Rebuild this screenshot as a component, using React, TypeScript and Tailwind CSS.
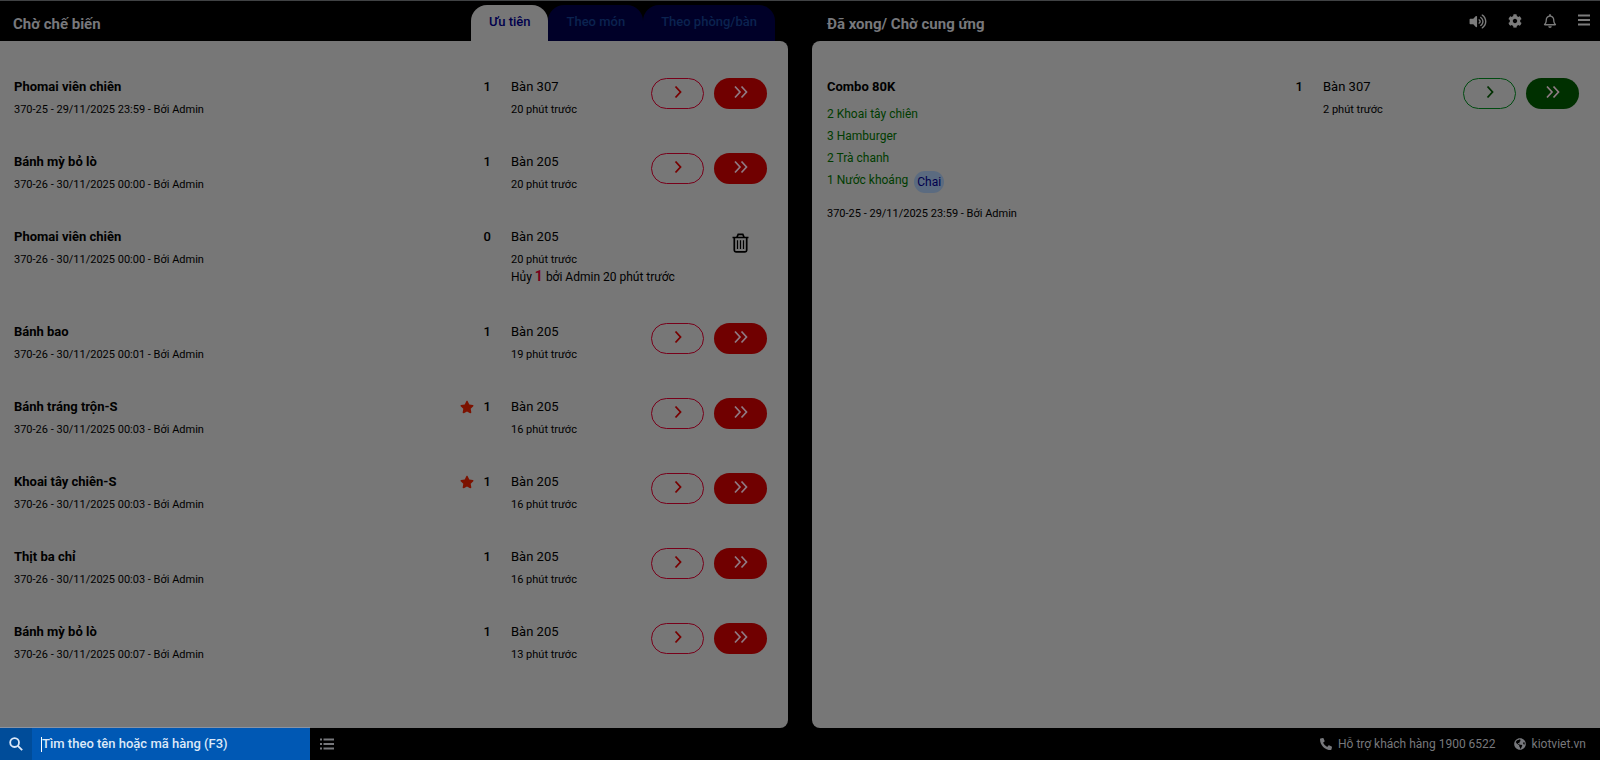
import { FaCog, FaGlobeAmericas, FaPhoneAlt, FaRegBell, FaStar, FaVolumeUp } from "react-icons/fa"

type Dish = {
  name: string
  note: string
  qty: number
  table: string
  ago: string
  starred?: boolean
  cancelled?: { qty: number; text: string }
  parts?: { text: string; unit?: string }[]
}

const WAITING: Dish[] = [
  { name: "Phomai viên chiên", note: "370-25 - 29/11/2025 23:59 - Bởi Admin", qty: 1, table: "Bàn 307", ago: "20 phút trước" },
  { name: "Bánh mỳ bỏ lò", note: "370-26 - 30/11/2025 00:00 - Bởi Admin", qty: 1, table: "Bàn 205", ago: "20 phút trước" },
  {
    name: "Phomai viên chiên",
    note: "370-26 - 30/11/2025 00:00 - Bởi Admin",
    qty: 0,
    table: "Bàn 205",
    ago: "20 phút trước",
    cancelled: { qty: 1, text: "bởi Admin 20 phút trước" },
  },
  { name: "Bánh bao", note: "370-26 - 30/11/2025 00:01 - Bởi Admin", qty: 1, table: "Bàn 205", ago: "19 phút trước" },
  { name: "Bánh tráng trộn-S", note: "370-26 - 30/11/2025 00:03 - Bởi Admin", qty: 1, table: "Bàn 205", ago: "16 phút trước", starred: true },
  { name: "Khoai tây chiên-S", note: "370-26 - 30/11/2025 00:03 - Bởi Admin", qty: 1, table: "Bàn 205", ago: "16 phút trước", starred: true },
  { name: "Thịt ba chỉ", note: "370-26 - 30/11/2025 00:03 - Bởi Admin", qty: 1, table: "Bàn 205", ago: "16 phút trước" },
  { name: "Bánh mỳ bỏ lò", note: "370-26 - 30/11/2025 00:07 - Bởi Admin", qty: 1, table: "Bàn 205", ago: "13 phút trước" },
]

const DONE: Dish[] = [
  {
    name: "Combo 80K",
    note: "370-25 - 29/11/2025 23:59 - Bởi Admin",
    qty: 1,
    table: "Bàn 307",
    ago: "2 phút trước",
    parts: [
      { text: "2 Khoai tây chiên" },
      { text: "3 Hamburger" },
      { text: "2 Trà chanh" },
      { text: "1 Nước khoáng", unit: "Chai" },
    ],
  },
]

const TONES = {
  red: { outline: "border-[#78001a] text-[#780000]", solid: "bg-[#700000]" },
  green: { outline: "border-[#004b10] text-[#003000]", solid: "bg-[#003000]" },
}

/* ─── Icons ──────────────────────────────────────────────── */
function Chevron() {
  return (
    <svg width="8" height="14" viewBox="0 0 8 14" fill="none" stroke="currentColor" strokeWidth="1.8" aria-hidden>
      <path d="M1.5 1.5L6.5 7L1.5 12.5" />
    </svg>
  )
}

function DoubleChevron() {
  return (
    <svg width="14" height="14" viewBox="0 0 14 14" fill="none" stroke="currentColor" strokeWidth="1.7" aria-hidden>
      <path d="M1 1.5L6 7L1 12.5M7.5 1.5L12.5 7L7.5 12.5" />
    </svg>
  )
}

function MenuIcon() {
  return (
    <svg width="12" height="12" viewBox="0 0 12 12" stroke="currentColor" strokeWidth="1.8" aria-hidden>
      <path d="M0 1.5H12M0 6H12M0 10.5H12" />
    </svg>
  )
}

function ListIcon() {
  return (
    <svg width="14" height="12" viewBox="0 0 14 12" stroke="currentColor" strokeWidth="1.8" aria-hidden>
      <path d="M0 1.5H2M3.5 1.5H14M0 6H2M3.5 6H14M0 10.5H2M3.5 10.5H14" />
    </svg>
  )
}

function SearchIcon() {
  return (
    <svg width="14" height="14" viewBox="0 0 14 14" fill="none" stroke="currentColor" strokeWidth="1.8" aria-hidden>
      <circle cx="5.6" cy="5.6" r="4.4" />
      <path d="M8.8 8.8L13.2 13.2" />
    </svg>
  )
}

function TrashIcon() {
  return (
    <svg width="17" height="20" viewBox="0 0 17 20" fill="none" stroke="currentColor" strokeWidth="1.7" aria-hidden>
      <path d="M0.5 4.5H16.5M5 4L6.2 1.4H10.8L12 4M2.3 4.5V17.2Q2.3 18.8 3.9 18.8H13.1Q14.7 18.8 14.7 17.2V4.5" />
      <path d="M5.5 7.2V16M8.5 7.2V16M11.5 7.2V16" strokeWidth="1.2" />
    </svg>
  )
}

/* ─── Dish row ───────────────────────────────────────────── */
function DishRow({ dish, tone }: { dish: Dish; tone: keyof typeof TONES }) {
  const colors = TONES[tone]
  return (
    <li className="flex items-start pb-[33px]">
      <div className="min-w-0 flex-1">
        <h2 className="text-[13px] leading-5 font-bold">{dish.name}</h2>
        {dish.parts && (
          <ul className="mt-1.5 mb-3 text-xs leading-[22px] text-[#003c00]">
            {dish.parts.map((part) => (
              <li key={part.text} className="flex items-start gap-1.5">
                {part.text}
                {part.unit && <span className="mt-0.5 rounded-full bg-[#5b6b80] px-[3px] text-[#00004c]">{part.unit}</span>}
              </li>
            ))}
          </ul>
        )}
        <p className="mt-1 text-[11px] leading-[18px]">{dish.note}</p>
      </div>
      <div className="flex w-12 items-center justify-end gap-2.5 pr-3">
        {dish.starred && <FaStar className="size-3.5 shrink-0 text-[#7c1200]" aria-label="Ưu tiên" />}
        <span className="text-[13px] leading-5 font-medium">{dish.qty}</span>
      </div>
      <div className="w-[148px] pl-2">
        <p className="text-[13px] leading-5">{dish.table}</p>
        <p className="mt-1 text-[11px] leading-[18px]">{dish.ago}</p>
        {dish.cancelled && (
          <p className="pb-1 text-xs leading-4 whitespace-nowrap">
            Hủy <b className="text-sm leading-none text-[#78001a]">{dish.cancelled.qty}</b> {dish.cancelled.text}
          </p>
        )}
      </div>
      {dish.cancelled ? (
        <div className="flex w-[116px] justify-end pt-1.5 pr-[18px]">
          <button type="button" aria-label="Xóa">
            <TrashIcon />
          </button>
        </div>
      ) : (
        <div className="flex gap-2.5 pt-px">
          <button type="button" aria-label="Chuyển một" className={`flex h-[31px] w-[53px] justify-center rounded-full border pt-[6px] ${colors.outline}`}>
            <Chevron />
          </button>
          <button type="button" aria-label="Chuyển tất cả" className={`flex h-[31px] w-[53px] justify-center rounded-full pt-[7px] text-[#8f7b84] ${colors.solid}`}>
            <DoubleChevron />
          </button>
        </div>
      )}
    </li>
  )
}

/* ─── Kitchen screen ─────────────────────────────────────── */
export default function App() {
  return (
    <div className="flex min-h-screen flex-col border-t border-[#404244] bg-black font-[Roboto,sans-serif] text-black">
      <main className="grid flex-1 grid-cols-2 gap-6">
        <section className="flex flex-col">
          <header className="flex h-10 items-end justify-between px-[13px]">
            <h1 className="pb-[3px] text-[15px] leading-7 font-bold text-[#77787c]">Chờ chế biến</h1>
            <nav className="flex text-[13px] font-medium">
              <button type="button" className="h-9 rounded-t-2xl bg-[#777] px-[18px] pb-0.5 text-[#00004c]">Ưu tiên</button>
              <button type="button" className="h-9 rounded-t-2xl bg-[#000028] px-[18px] pb-0.5 text-[#0b2350]">Theo món</button>
              <button type="button" className="h-9 rounded-t-2xl bg-[#000028] px-[18px] pb-0.5 text-[#0b2350]">Theo phòng/bàn</button>
            </nav>
          </header>
          <ul className="flex-1 rounded-r-lg bg-[#777] pt-9 pr-[21px] pl-3.5">
            {WAITING.map((dish, i) => (
              <DishRow key={i} dish={dish} tone="red" />
            ))}
          </ul>
        </section>

        <section className="flex flex-col">
          <header className="flex h-10 items-end justify-between pl-[15px]">
            <h1 className="pb-[3px] text-[15px] leading-7 font-bold text-[#77787c]">Đã xong/ Chờ cung ứng</h1>
            <div className="flex h-full items-center gap-[21px] pr-2.5 text-[#7c7c7c]">
              <button type="button" aria-label="Âm thanh"><FaVolumeUp className="h-[15px] w-[18px]" /></button>
              <button type="button" aria-label="Thiết lập"><FaCog className="size-3.5" /></button>
              <button type="button" aria-label="Thông báo"><FaRegBell className="size-3.5" /></button>
              <button type="button" aria-label="Menu" className="pb-0.5"><MenuIcon /></button>
            </div>
          </header>
          <ul className="flex-1 rounded-l-lg bg-[#777] pt-9 pr-[21px] pl-[15px]">
            {DONE.map((dish) => (
              <DishRow key={dish.name} dish={dish} tone="green" />
            ))}
          </ul>
        </section>
      </main>

      <footer className="flex h-8 items-end text-[#77787c]">
        <label className="flex h-[33px] w-[310px] items-center border-t border-[#8a93a3] bg-[#0058b4] text-[#dce8f8]">
          <span className="flex h-full w-8 items-center justify-center bg-[#004c99]">
            <SearchIcon />
          </span>
          <span className="ml-[9px] h-[15px] w-px bg-white" aria-hidden />
          <input
            type="text"
            aria-label="Tìm theo tên hoặc mã hàng"
            placeholder="Tìm theo tên hoặc mã hàng (F3)"
            className="h-full min-w-0 flex-1 bg-transparent pb-0.5 text-[13px] font-medium outline-none placeholder:text-[#dce8f8]"
          />
        </label>
        <div className="flex h-full flex-1 items-center justify-between pr-3.5 pl-2.5 text-xs">
          <button type="button" aria-label="Danh sách"><ListIcon /></button>
          <div className="flex gap-[18px]">
            <a href="tel:19006522" className="flex items-center gap-1.5"><FaPhoneAlt className="size-3" />Hỗ trợ khách hàng 1900 6522</a>
            <a href="#kiotviet" className="flex items-center gap-1.5"><FaGlobeAmericas className="size-3" />kiotviet.vn</a>
          </div>
        </div>
      </footer>
    </div>
  )
}
